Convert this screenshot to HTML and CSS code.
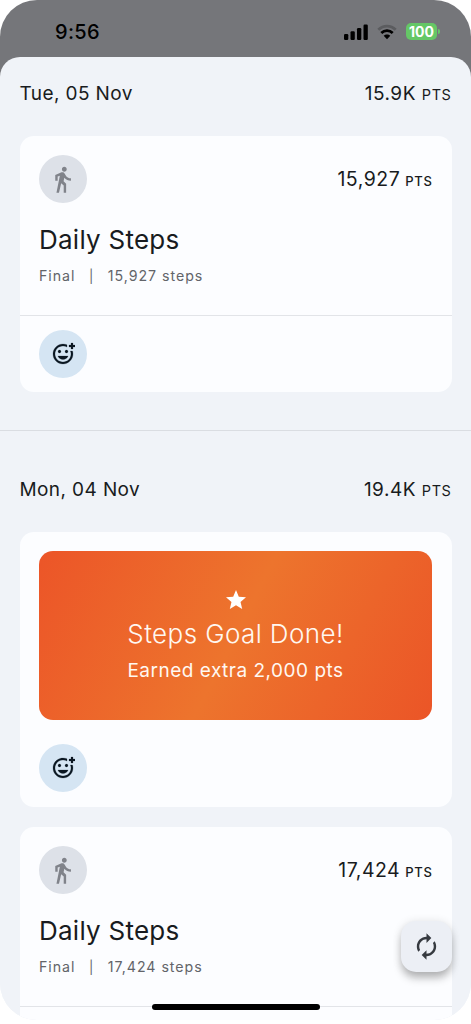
FILE: index.html
```
<!DOCTYPE html>
<html lang="en">
<head>
<meta charset="utf-8">
<title>Points</title>
<link rel="stylesheet" href="styles.css">
</head>
<body>
<svg class="symbols" aria-hidden="true">
  <symbol id="walk" viewBox="0 0 24 24"><path d="M13.5 5.5c1.1 0 2-.9 2-2s-.9-2-2-2-2 .9-2 2 .9 2 2 2zM9.8 8.9L7 23h2.1l1.8-8 2.1 2v6h2v-7.5l-2.1-2 .6-3C14.8 12 16.8 13 19 13v-2c-1.9 0-3.5-1-4.3-2.4l-1-1.6c-.4-.6-1-1-1.7-1-.3 0-.5.1-.8.1L6 8.3V13h2V9.6l1.8-.7"/></symbol>
  <symbol id="react" viewBox="0 0 24 24"><path d="M7 9.5C7 8.67 7.67 8 8.500 8s1.500.67 1.500 1.500S9.330 11 8.500 11 7 10.330 7 9.500zm5 8c2.330 0 4.310-1.460 5.110-3.500H6.890c.8 2.040 2.780 3.500 5.110 3.500zM15.500 11c.83 0 1.500-.67 1.500-1.500S16.330 8 15.500 8 14 8.670 14 9.500s.67 1.500 1.500 1.500zM22 1h-2v2h-2v2h2v2h2V5h2V3h-2V1zm-2 11c0 4.420-3.580 8-8 8s-8-3.580-8-8 3.580-8 8-8c1.460 0 2.820.4 4 1.080V2.840C14.770 2.300 13.420 2 11.990 2 6.470 2 2 6.480 2 12s4.470 10 9.990 10C17.520 22 22 17.520 22 12c0-1.050-.17-2.050-.47-3h-2.130c.38.93.6 1.940.6 3z"/></symbol>
</svg>
<div class="phone">
  <header class="status">
    <span class="clock">9:56</span>
    <div class="indicators">
      <svg class="signal" viewBox="0 0 24 16"><rect x="0" y="10" width="4.300" height="6" rx="1.200"/><rect x="6.500" y="7.300" width="4.300" height="8.700" rx="1.200"/><rect x="13" y="4" width="4.300" height="12" rx="1.200"/><rect x="19.500" y="0.500" width="4.300" height="15.500" rx="1.200"/></svg>
      <svg class="wifi" viewBox="0 0 20 16" fill="none"><path class="wifi-outer" d="M1.300 5.800C6.300.8 13.700.8 18.700 5.800" stroke-width="2.700"/><path d="M4.300 9C7.500 5.800 12.500 5.800 15.700 9" stroke="#000" stroke-width="2.700"/><path d="M6.700 11.800C8.500 9.900 11.500 9.900 13.300 11.800L10 15.300z" fill="#000"/></svg>
      <div class="battery"><span class="level">100</span><i class="nub"></i></div>
    </div>
  </header>
  <main class="sheet">
    <section class="day">
      <div class="day-head"><span class="date">Tue, 05 Nov</span><span class="total">15.9K <small>PTS</small></span></div>
      <article class="card">
        <div class="activity">
          <div class="activity-top"><span class="circle walk"><svg><use href="#walk"/></svg></span><span class="points">15,927 <small>PTS</small></span></div>
          <h2>Daily Steps</h2>
          <p class="meta"><span>Final</span><span class="bar">|</span><span>15,927 steps</span></p>
        </div>
        <div class="reactions"><span class="circle react"><svg><use href="#react"/></svg></span></div>
      </article>
    </section>
    <section class="day second">
      <div class="day-head"><span class="date">Mon, 04 Nov</span><span class="total">19.4K <small>PTS</small></span></div>
      <article class="card goal">
        <div class="banner">
          <svg class="star" viewBox="0 0 24 24"><path d="M12 17.270L18.180 21l-1.640-7.030L22 9.240l-7.190-.61L12 2 9.190 8.630 2 9.240l5.460 4.730L5.820 21z"/></svg>
          <h2>Steps Goal Done!</h2>
          <p>Earned extra 2,000 pts</p>
        </div>
        <span class="circle react"><svg><use href="#react"/></svg></span>
      </article>
      <article class="card last">
        <div class="activity">
          <div class="activity-top"><span class="circle walk"><svg><use href="#walk"/></svg></span><span class="points">17,424 <small>PTS</small></span></div>
          <h2>Daily Steps</h2>
          <p class="meta"><span>Final</span><span class="bar">|</span><span>17,424 steps</span></p>
        </div>
        <div class="reactions"></div>
      </article>
    </section>
  </main>
  <button class="refresh" aria-label="Refresh"><svg viewBox="0 0 24 24"><path d="M12 6v3l4-4-4-4v3c-4.420 0-8 3.580-8 8 0 1.570.46 3.030 1.240 4.260L6.700 14.800c-.45-.83-.7-1.790-.7-2.800 0-3.310 2.690-6 6-6zm6.760 1.740L17.300 9.200c.44.84.7 1.790.7 2.800 0 3.310-2.690 6-6 6v-3l-4 4 4 4v-3c4.420 0 8-3.580 8-8 0-1.570-.46-3.030-1.240-4.260z"/></svg></button>
  <i class="home-bar"></i>
</div>
</body>
</html>
```
FILE: styles.css
```
* { box-sizing: border-box; }
body { margin: 0; background: #fff; font-family: Inter, "Liberation Sans", sans-serif; color: #181b20; }
h2, p { margin: 0; font-weight: 400; }
.symbols { display: none; }
.phone { position: relative; height: 1020px; overflow: hidden; border-radius: 37px; background: linear-gradient(#75767a 90px, #f0f3f8 90px); }
.status { height: 57px; padding: 6px 31px 0 55px; display: flex; align-items: center; justify-content: space-between; color: #000; }
.clock { font-size: 20px; font-weight: 550; letter-spacing: 0.3px; }
.indicators { display: flex; align-items: center; gap: 9px; }
.signal { width: 24px; height: 16px; }
.wifi { width: 20px; height: 16px; }
.wifi-outer { stroke: #5b5c5f; }
.battery { display: flex; align-items: center; gap: 1px; }
.level { width: 31px; height: 17px; border-radius: 5px; background: #65c766; color: #fff; font-size: 14px; line-height: 17px; font-weight: 700; text-align: center; }
.nub { width: 2px; height: 5px; border-radius: 0 2px 2px 0; background: #65c766; }
.sheet { height: 963px; overflow: hidden; border-radius: 20px 20px 0 0; background: #f0f3f8; }
.day { padding: 0 19.500px; }
.day:first-child { height: 374px; border-bottom: 1px solid #dadde2; }
.day-head { height: 79px; padding-top: 24px; display: flex; justify-content: space-between; line-height: 26px; font-size: 19px; letter-spacing: 0.4px; font-weight: 440; }
.second .day-head { height: 101px; padding-top: 46px; }
.total { letter-spacing: 0.5px; }
small { font-size: 14.500px; font-weight: 400; letter-spacing: 0.6px; }
.card { border-radius: 14px; background: #fcfdff; overflow: hidden; }
.activity { height: 179px; padding: 19px 19px 0 19.500px; }
.activity-top { display: flex; justify-content: space-between; align-items: center; height: 48px; }
.circle { display: flex; align-items: center; justify-content: center; width: 48px; height: 48px; border-radius: 50%; }
.walk { background: #dde1e8; fill: #80838a; }
.walk svg { width: 29px; height: 29px; margin-right: 1px; }
.react { background: #d5e5f3; fill: #0b1722; }
.react svg { width: 24px; height: 24px; stroke: #0b1722; stroke-width: 0.2; }
.points { font-size: 19.500px; letter-spacing: 0.5px; word-spacing: -1px; }
.points small { font-size: 13px; letter-spacing: 0.7px; font-weight: 450; }
.activity h2 { margin-top: 20px; font-size: 26px; line-height: 34px; letter-spacing: 0.25px; font-weight: 370; }
.meta { display: flex; gap: 13.500px; margin-top: 9px; font-size: 14.200px; line-height: 20px; letter-spacing: 0.97px; color: #626469; font-weight: 430; }
.bar { font-size: 13px; }
.reactions { height: 77px; padding: 14px 19.500px; border-top: 1px solid #e2e4e8; }
.goal { height: 275px; padding: 19px 19.500px; }
.banner { height: 169px; margin-bottom: 24px; padding-top: 37px; border-radius: 14px; background: linear-gradient(117deg, #ec5528 0%, #ed742d 50%, #eb5527 100%); color: #fff8f1; display: flex; flex-direction: column; align-items: center; }
.star { width: 24px; height: 24px; fill: #fff; }
.banner h2 { margin-top: 5px; font-size: 26px; line-height: 34px; letter-spacing: 0.4px; font-weight: 350; }
.banner p { margin-top: 7px; font-size: 19px; line-height: 26px; letter-spacing: 0.5px; font-weight: 420; }
.last { margin-top: 20px; }
.refresh { position: absolute; left: 401px; top: 921px; width: 50.500px; height: 50.500px; padding: 0; border: 0; border-radius: 15px; background: #eceff5; box-shadow: 0 7px 9px -1px rgba(0,0,0,.25), 0 1px 10px rgba(0,0,0,.12); display: flex; align-items: center; justify-content: center; }
.refresh svg { width: 29px; height: 29px; fill: #363a40; }
.home-bar { position: absolute; left: 152px; top: 1004px; width: 168px; height: 6px; border-radius: 3px; background: #000; }
```
